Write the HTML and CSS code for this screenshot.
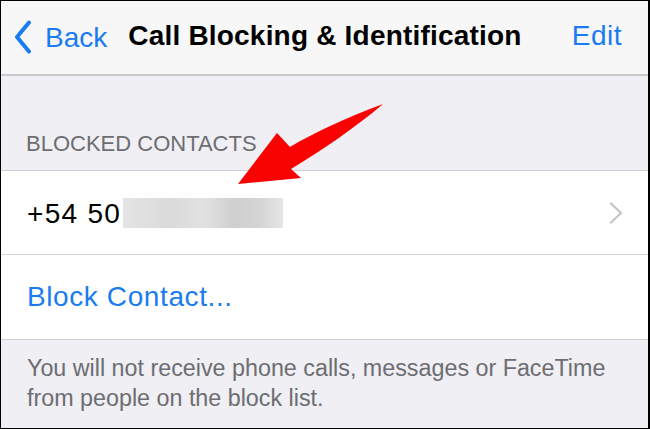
FILE: index.html
```html
<!DOCTYPE html>
<html>
<head>
<meta charset="utf-8">
<link rel="stylesheet" href="styles.css">
</head>
<body>
<div class="screen">
  <header class="navbar">
    <div class="nav-back">
      <svg class="back-chevron" width="18" height="34" viewBox="0 0 18 34"><path d="M15 2.5 L3 17 L15 31.5" fill="none" stroke="#1a7cf0" stroke-width="4" stroke-linecap="round" stroke-linejoin="round"/></svg>
      <span>Back</span>
    </div>
    <div class="nav-title">Call Blocking &amp; Identification</div>
    <div class="nav-edit">Edit</div>
  </header>
  <div class="section-header">BLOCKED CONTACTS</div>
  <div class="group">
    <div class="cell cell-number">
      <span class="number">+54 50</span>
      <span class="blur"></span>
      <svg class="chevron" width="14" height="22" viewBox="0 0 14 22"><path d="M2 1.5 L12 11 L2 20.5" fill="none" stroke="#c4c4c8" stroke-width="2.2" stroke-linecap="round" stroke-linejoin="round"/></svg>
    </div>
    <div class="cell cell-action">Block Contact...</div>
  </div>
  <p class="footer">You will not receive phone calls, messages or FaceTime from people on the block list.</p>
  <svg class="arrow" width="650" height="429" viewBox="0 0 650 429"><path d="M383 104 C 350 116, 315 132, 290 147 L 277 133 L 238 184 L 301 178 L 291 169 C 322 150, 355 128, 383 104 Z" fill="#f90202"/></svg>
</div>
</body>
</html>
```
FILE: styles.css
```css
* { box-sizing: border-box; }
html, body { margin: 0; padding: 0; }
body {
  font-family: "Liberation Sans", Arial, sans-serif;
  background: #000;
}
.screen {
  position: relative;
  width: 650px;
  height: 429px;
  border: 1px solid #000;
  border-right-width: 2px;
  background: #efeff4;
  overflow: hidden;
}
.navbar {
  height: 75px;
  background: #f7f7f7;
  border-bottom: 2px solid #c9c9cc;
  display: flex;
  align-items: center;
  padding: 0 26px 4px 13px;
  font-size: 28px;
}
.nav-back {
  display: flex;
  align-items: center;
  gap: 13px;
  color: #1a7cf0;
  margin-top: 4px;
}
.back-chevron { margin-top: -2px; }
.nav-title {
  font-weight: bold;
  color: #000;
  margin-left: 21px;
  letter-spacing: 0.2px;
}
.nav-edit {
  margin-left: auto;
  color: #1a7cf0;
  letter-spacing: 0.5px;
}
.section-header {
  height: 94px;
  display: flex;
  align-items: flex-end;
  padding: 0 0 13px 25px;
  font-size: 22px;
  color: #6d6d72;
}
.group {
  background: #fff;
  border-top: 1px solid #d0d0d4;
  border-bottom: 1px solid #d0d0d4;
}
.cell {
  height: 84px;
  display: flex;
  align-items: center;
  padding: 0 25px 0 26px;
  font-size: 28px;
}
.cell-number {
  border-bottom: 1px solid #d6d6da;
}
.number { letter-spacing: 1.3px; color: #000; margin-top: 2px; }
.blur {
  width: 160px;
  height: 30px;
  margin-left: 2px;
  background: linear-gradient(90deg, #e4e4e4 0%, #dadada 30%, #e2e2e2 50%, #cfcfcf 70%, #d4d4d4 85%, #e6e6e6 100%);
}
.chevron { margin-left: auto; }
.cell-action {
  color: #1a7cf0;
  letter-spacing: 0.6px;
}
.footer {
  margin: 0;
  padding: 13px 30px 0 26px;
  font-size: 23.3px;
  line-height: 30px;
  color: #6d6d72;
}
.arrow {
  position: absolute;
  left: -1px;
  top: -1px;
}
```
